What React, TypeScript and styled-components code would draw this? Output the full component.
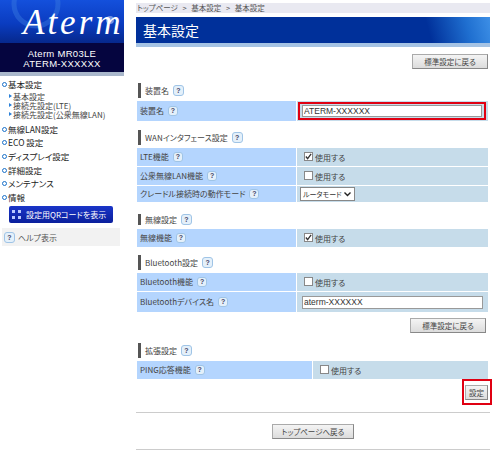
import React from 'react';
import styled, { createGlobalStyle } from 'styled-components';

const GlobalStyle = createGlobalStyle`
  html, body {
    margin: 0;
    padding: 0;
    background: #fff;
    font-family: "Noto Sans CJK JP", "Liberation Sans", sans-serif;
    font-size: 8px;
    font-feature-settings: "palt";
    color: #333;
  }
`;

const Section = ({
  title,
  top,
  short,
  children,
}: {
  title: string;
  top: number;
  short?: boolean;
  children: React.ReactNode;
}) => (
  <>
    <SectionHead $top={top} $short={short}>
      <SectionTitle>{title}</SectionTitle>
      <HelpMark $large>?</HelpMark>
    </SectionHead>
    <Table>{children}</Table>
  </>
);

const Check = ({ checked }: { checked?: boolean }) => (
  <CheckLine>
    <CheckBox>
      {checked && (
        <svg width="7" height="7" viewBox="0 0 8 8">
          <path d="M1 4 L3 6.5 L7 1" fill="none" stroke="#333" strokeWidth="1.5" />
        </svg>
      )}
    </CheckBox>
    <CheckText>使用する</CheckText>
  </CheckLine>
);

const App: React.FC = () => (
  <Page>
    <GlobalStyle />
    <Sidebar>
      <Logo>
        <svg width="124" height="43" viewBox="0 0 124 43">
          <circle cx="36" cy="4" r="22" fill="none" stroke="#3a7be0" strokeWidth="5" opacity="0.45" />
          <circle cx="110" cy="20" r="4" fill="#9db8f0" opacity="0.7" />
        </svg>
        <LogoText>Aterm</LogoText>
      </Logo>
      <Device>
        <div>Aterm MR03LE</div>
        <div>ATERM-XXXXXX</div>
      </Device>
      <DeviceEdge />
      <Menu>
        <MenuItem>基本設定</MenuItem>
        <SubList>
          <SubItem>基本設定</SubItem>
          <SubItem>接続先設定(LTE)</SubItem>
          <SubItem>接続先設定(公衆無線LAN)</SubItem>
        </SubList>
        <MenuItem>無線LAN設定</MenuItem>
        <MenuItem>ECO 設定</MenuItem>
        <MenuItem>ディスプレイ設定</MenuItem>
        <MenuItem>詳細設定</MenuItem>
        <MenuItem>メンテナンス</MenuItem>
        <MenuItem>情報</MenuItem>
      </Menu>
      <QrButton>
        <svg width="9" height="9" viewBox="0 0 9 9">
          <path d="M0 0h3v3H0zM6 0h3v3H6zM0 6h3v3H0zM6 6h3v3H6z" fill="#b8c8ff" />
        </svg>
        設定用QRコードを表示
      </QrButton>
      <HelpToggle>
        <HelpMark $large>?</HelpMark>
        ヘルプ表示
      </HelpToggle>
    </Sidebar>

    <Main>
      <Crumb>トップページ &gt; 基本設定 &gt; 基本設定</Crumb>
      <TitleBar>基本設定</TitleBar>
      <ButtonRow $top={7}>
        <GreyButton>標準設定に戻る</GreyButton>
      </ButtonRow>

      <Section title="装置名" top={14}>
        <Row $height={20}>
          <Label>装置名<HelpMark>?</HelpMark></Label>
          <Value>
            <Highlight>
              <TextInput $height={12} defaultValue="ATERM-XXXXXX" />
            </Highlight>
          </Value>
        </Row>
      </Section>

      <Section title="WANインタフェース設定" top={9}>
        <Row $height={18}>
          <Label>LTE機能<HelpMark>?</HelpMark></Label>
          <Value><Check checked /></Value>
        </Row>
        <Row $height={18}>
          <Label>公衆無線LAN機能<HelpMark>?</HelpMark></Label>
          <Value><Check /></Value>
        </Row>
        <Row $height={16}>
          <Label>クレードル接続時の動作モード<HelpMark>?</HelpMark></Label>
          <Value>
            <ModeSelect>
              ルータモード
              <svg width="7" height="5" viewBox="0 0 7 5">
                <path d="M0.5 0.5 L3.5 3.5 L6.5 0.5" fill="none" stroke="#222" strokeWidth="1.4" />
              </svg>
            </ModeSelect>
          </Value>
        </Row>
      </Section>

      <Section title="無線設定" top={12} short>
        <Row $height={18}>
          <Label>無線機能<HelpMark>?</HelpMark></Label>
          <Value><Check checked /></Value>
        </Row>
      </Section>

      <Section title="Bluetooth設定" top={8}>
        <Row $height={18}>
          <Label>Bluetooth機能<HelpMark>?</HelpMark></Label>
          <Value><Check /></Value>
        </Row>
        <Row $height={20}>
          <Label>Bluetoothデバイス名<HelpMark>?</HelpMark></Label>
          <Value>
            <InputSlot>
              <TextInput $height={13} defaultValue="aterm-XXXXXX" />
            </InputSlot>
          </Value>
        </Row>
      </Section>
      <ButtonRow $top={6} $right={4}>
        <GreyButton>標準設定に戻る</GreyButton>
      </ButtonRow>

      <Section title="拡張設定" top={10}>
        <Row $height={18} $labelWidth={175}>
          <Label>PING応答機能<HelpMark>?</HelpMark></Label>
          <Value><Check /></Value>
        </Row>
      </Section>
      <SubmitRow>
        <SubmitFrame>
          <GreyButton $narrow>設定</GreyButton>
        </SubmitFrame>
      </SubmitRow>

      <Rule $top={7} />
      <BackRow>
        <GreyButton $wide>トップページへ戻る</GreyButton>
      </BackRow>
      <Rule />
    </Main>
  </Page>
);

export default App;

const Page = styled.div`
  display: flex;
  width: 500px;
  height: 450px;
  overflow: hidden;
`;

const Sidebar = styled.div`
  width: 124px;
  flex: none;
`;

const Logo = styled.div`
  position: relative;
  height: 43px;
  overflow: hidden;
  background: linear-gradient(180deg, #1450dc 0%, #0a3cc0 55%, #06288c 100%);
  svg {
    position: absolute;
    left: 0;
    top: 0;
  }
`;

const LogoText = styled.div`
  position: absolute;
  left: 23px;
  top: 2px;
  font-family: "Liberation Serif", serif;
  font-style: italic;
  font-size: 35px;
  line-height: 41px;
  color: #fff;
  letter-spacing: 3px;
  font-feature-settings: normal;
`;

const Device = styled.div`
  height: 29px;
  background: #05053f;
  color: #fff;
  font-family: "Liberation Sans", sans-serif;
  font-size: 9.5px;
  line-height: 10px;
  letter-spacing: 0.3px;
  text-align: center;
  padding-top: 6px;
  box-sizing: border-box;
`;

const DeviceEdge = styled.div`
  height: 4px;
  background: #a9b7cb;
`;

const Menu = styled.div`
  padding: 2px 0 0 2px;
`;

const MenuItem = styled.div`
  display: flex;
  align-items: center;
  height: 13.6px;
  font-size: 8.5px;
  line-height: 13px;
  color: #222;
  white-space: nowrap;
  &::before {
    content: '';
    width: 3px;
    height: 3px;
    margin-right: 1px;
    border: 1.5px solid #1a70c8;
    border-radius: 50%;
    flex: none;
  }
`;

const SubList = styled.div`
  padding: 0 0 4px;
`;

const SubItem = styled.div`
  display: flex;
  align-items: center;
  height: 9px;
  padding-left: 7px;
  font-size: 8px;
  line-height: 9px;
  color: #444;
  white-space: nowrap;
  &::before {
    content: '';
    width: 0;
    height: 0;
    margin-right: 1px;
    border-left: 3px solid #2a80d8;
    border-top: 2px solid transparent;
    border-bottom: 2px solid transparent;
    flex: none;
  }
`;

const QrButton = styled.div`
  display: flex;
  align-items: center;
  gap: 5px;
  width: 104px;
  height: 17px;
  margin: 2px 0 0 9px;
  padding-left: 3px;
  box-sizing: border-box;
  background: linear-gradient(180deg, #1a35c8, #0a1f9c);
  border-radius: 2px;
  color: #fff;
  font-size: 8px;
  white-space: nowrap;
`;

const HelpToggle = styled.div`
  display: flex;
  align-items: center;
  gap: 3px;
  width: 118px;
  height: 18px;
  margin: 5px 0 0 2px;
  padding-left: 2px;
  box-sizing: border-box;
  background: #f2f2f2;
  font-size: 8px;
  color: #555;
  > span {
    margin-left: 0;
  }
`;

const Main = styled.div`
  width: 354px;
  margin-left: 12px;
  padding-top: 3px;
  flex: none;
`;

const Crumb = styled.div`
  height: 10px;
  line-height: 10px;
  padding-left: 1px;
  background: #e9e9f1;
  font-size: 7.5px;
  word-spacing: 3px;
  color: #555;
  white-space: nowrap;
`;

const TitleBar = styled.div`
  height: 26px;
  margin-top: 4px;
  padding-left: 7px;
  border-bottom: 4px solid #a5c3e4;
  background: linear-gradient(75deg, #00309a 0%, #00309a 82%, #1f6fd0 93%, #3d8fe6 100%);
  color: #fff;
  font-size: 14px;
  line-height: 26px;
  font-feature-settings: normal;
`;

const ButtonRow = styled.div<{ $top: number; $right?: number }>`
  display: flex;
  justify-content: flex-end;
  margin-top: ${(p) => p.$top}px;
  padding-right: ${(p) => p.$right ?? 2}px;
`;

const GreyButton = styled.div<{ $narrow?: boolean; $wide?: boolean }>`
  width: ${(p) => (p.$narrow ? 23 : p.$wide ? 82 : 76)}px;
  height: 15px;
  box-sizing: border-box;
  border: 1px solid #aaa;
  border-right-color: #888;
  border-bottom-color: #888;
  background: linear-gradient(180deg, #f4f4f4, #dcdcdc);
  font-size: 7.5px;
  line-height: 13px;
  text-align: center;
  color: #444;
  white-space: nowrap;
`;

const SectionHead = styled.div<{ $top: number; $short?: boolean }>`
  display: flex;
  align-items: center;
  height: ${(p) => (p.$short ? 11 : 15)}px;
  margin: ${(p) => p.$top}px 0 ${(p) => (p.$short ? 4 : 3)}px 2px;
  padding-left: 4px;
  border-left: 3px solid #555;
`;

const SectionTitle = styled.span`
  font-size: 8px;
  line-height: 12px;
  color: #444;
  white-space: nowrap;
`;

const HelpMark = styled.span<{ $large?: boolean }>`
  display: inline-block;
  width: ${(p) => (p.$large ? 9 : 8)}px;
  height: ${(p) => (p.$large ? 9 : 8)}px;
  margin-left: 4px;
  border: 1px solid #9fc4e6;
  border-radius: 3px;
  background: #e4f0fa;
  color: #446;
  font-family: "Liberation Sans", sans-serif;
  font-size: 7px;
  font-weight: bold;
  line-height: ${(p) => (p.$large ? 9 : 8)}px;
  text-align: center;
  flex: none;
`;

const Table = styled.div`
  display: flex;
  flex-direction: column;
  gap: 1px;
  margin: 0 2px 0 1px;
`;

const Label = styled.div`
  display: flex;
  align-items: center;
  padding-left: 3px;
  background: #b4d5fe;
  font-size: 8px;
  line-height: 12px;
  color: #444;
  white-space: nowrap;
`;

const Value = styled.div`
  display: flex;
  flex: 1;
  align-items: center;
  padding-left: 3px;
  padding-right: 4px;
  background: #c6dcea;
  min-width: 0;
`;

const Row = styled.div<{ $height: number; $labelWidth?: number }>`
  display: flex;
  gap: 1px;
  height: ${(p) => p.$height}px;
  ${Label} {
    width: ${(p) => p.$labelWidth ?? 159}px;
    box-sizing: border-box;
    flex: none;
  }
`;

const CheckLine = styled.label`
  display: flex;
  align-items: center;
  gap: 2px;
  margin-left: 4px;
`;

const CheckBox = styled.span`
  display: flex;
  align-items: center;
  justify-content: center;
  width: 7px;
  height: 7px;
  margin-bottom: 2px;
  border: 1px solid #888;
  background: #fff;
`;

const CheckText = styled.span`
  font-size: 8px;
  line-height: 12px;
  color: #444;
  margin-top: 2px;
`;

const TextInput = styled.input<{ $height: number }>`
  display: block;
  width: 100%;
  height: ${(p) => p.$height}px;
  box-sizing: border-box;
  padding: 0 1px;
  margin: 0;
  border: 1px solid #999;
  background: #fff;
  font-family: "Liberation Sans", sans-serif;
  font-size: 8.5px;
  color: #333;
  outline: none;
`;

const InputSlot = styled.div`
  flex: 1;
  min-width: 0;
  padding: 0 1px 0 2px;
`;

const Highlight = styled.div`
  flex: 1;
  min-width: 0;
  padding: 1px 2px;
  margin: 0 -2px;
  border: 2px solid #e00012;
`;

const ModeSelect = styled.div`
  display: flex;
  align-items: center;
  justify-content: space-between;
  width: 55px;
  height: 14px;
  box-sizing: border-box;
  padding: 0 3px 0 2px;
  border: 1px solid #888;
  background: #fff;
  font-size: 7px;
  line-height: 12px;
  color: #333;
  white-space: nowrap;
`;

const SubmitRow = styled.div`
  display: flex;
  justify-content: flex-end;
`;

const SubmitFrame = styled.div`
  padding: 4px 2px 3px 1px;
  border: 2px solid #e00012;
  margin-right: -2px;
`;

const Rule = styled.div<{ $top?: number }>`
  height: 1px;
  margin-top: ${(p) => p.$top ?? 0}px;
  background: #ccc;
`;

const BackRow = styled.div`
  display: flex;
  justify-content: center;
  padding: 11px 0 10px;
`;
